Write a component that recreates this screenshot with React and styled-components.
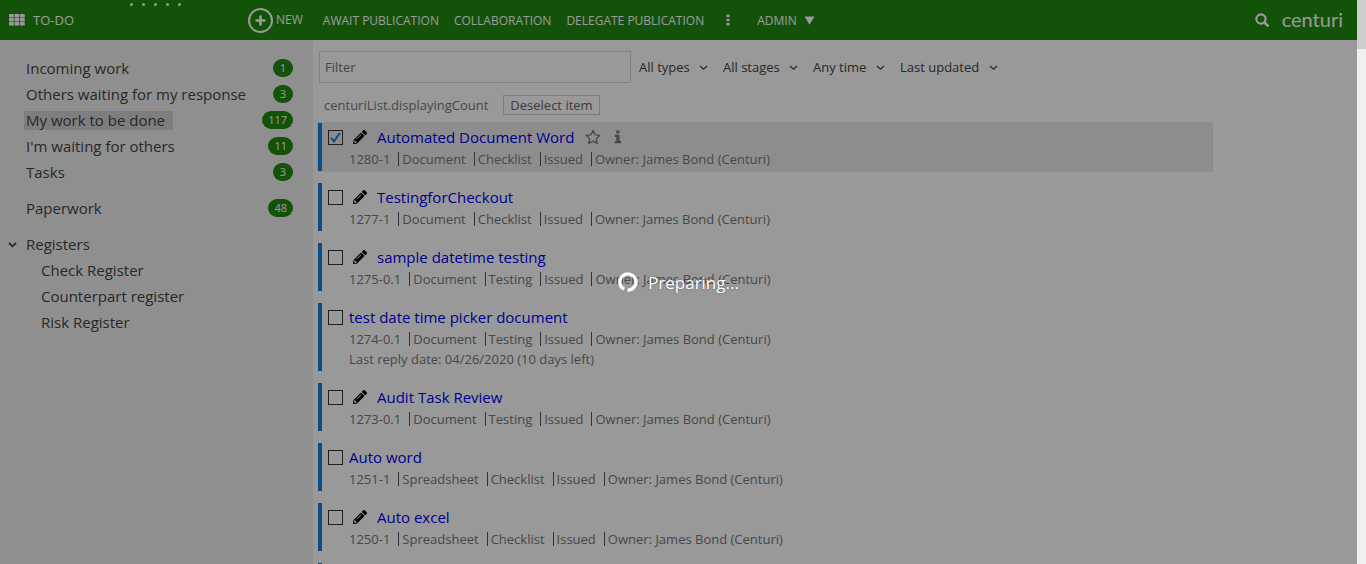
import React from "react";
import styled, { createGlobalStyle, css } from "styled-components";
import { FaPencilAlt } from "react-icons/fa";

const GlobalStyle = createGlobalStyle`
  *, *::before, *::after { box-sizing: border-box; }
  body {
    margin: 0;
    font-family: "Open Sans", "Noto Sans", sans-serif;
    font-size: 13px;
    color: #444;
    background: #fff;
  }
  button, input, select { font: inherit; color: inherit; }
`;

const Window = styled.div`
  display: flex;
  height: 100vh;
  overflow: hidden;
`;

const Page = styled.div`
  position: relative;
  flex: 1;
  min-width: 0;
  display: flex;
  flex-direction: column;
`;

const ScrollTrack = styled.div`
  width: 9px;
  flex: none;
  background: #f0f0f0;
`;

const ScrollThumb = styled.div`
  height: 49px;
  background: #cdcdcd;
`;

const Header = styled.header`
  position: relative;
  flex: none;
  display: flex;
  align-items: center;
  height: 40px;
  padding: 0 14px 0 9px;
  background: #208a10;
  color: #fff;
`;

const DragDots = styled.div`
  position: absolute;
  top: 3px;
  left: 130px;
  display: flex;
  gap: 9px;
`;

const Dot = styled.span`
  width: 3px;
  height: 3px;
  border-radius: 50%;
  background: #fff;
`;

const HomeLink = styled.a`
  display: flex;
  align-items: center;
  gap: 8px;
  width: 239px;
  color: inherit;
  text-decoration: none;
`;

const Nav = styled.nav`
  display: flex;
  align-items: center;
  gap: 15px;
  flex: 1;
`;

const NavButton = styled.button`
  display: flex;
  align-items: center;
  gap: ${(p) => p.$gap || 0}px;
  padding: 1px 0 0;
  border: 0;
  background: none;
  font-size: 12px;
  line-height: 20px;
  white-space: nowrap;
`;

const NewButton = styled(NavButton)`
  padding: 0 5px 0 0;
`;

const MoreButton = styled(NavButton)`
  padding: 0 12px 0 7px;
`;

const PlusRing = styled.span`
  display: grid;
  place-items: center;
  width: 25px;
  height: 25px;
  border: 2px solid #fff;
  border-radius: 50%;
`;

const IconButton = styled.button`
  display: inline-flex;
  padding: 0;
  border: 0;
  background: none;
`;

const Logo = styled.a`
  margin-left: 13px;
  padding-bottom: 3px;
  font-family: Lato, sans-serif;
  font-size: 20px;
  line-height: 24px;
  color: #fff;
  text-decoration: none;
`;

const Body = styled.div`
  flex: 1;
  min-height: 0;
  display: flex;
`;

const Sidebar = styled.aside`
  flex: none;
  width: 313px;
  padding: 15px 20px 0 8px;
  background: #efefef;
  overflow: hidden;
`;

const NavGroup = styled.ul`
  list-style: none;
  margin: 0 0 10px;
  padding: 0 0 0 ${(p) => (p.$nested ? 31 : 16)}px;
`;

const SideItem = styled.li`
  display: flex;
  align-items: center;
  justify-content: space-between;
  height: 26px;
`;

const SideLink = styled.a`
  padding: 0 8px 0 2px;
  font-size: 15px;
  line-height: 19px;
  color: #444;
  text-decoration: none;
  background: ${(p) => (p.$active ? "#d3d3d3" : "transparent")};
`;

const Badge = styled.span`
  min-width: 20px;
  height: 18px;
  padding: 0 6px;
  border-radius: 9px;
  background: #208a10;
  color: #fff;
  font-size: 11px;
  line-height: 18px;
  text-align: center;
`;

const GroupToggle = styled.button`
  display: flex;
  align-items: center;
  gap: 9px;
  height: 26px;
  padding: 0;
  border: 0;
  background: none;
  font-size: 15px;
`;

const Main = styled.main`
  flex: 1;
  min-width: 0;
  padding: 11px 0 0 5px;
  overflow: hidden;
`;

const Toolbar = styled.div`
  display: flex;
  align-items: center;
  gap: 15px;
  padding-left: 1px;
`;

const FilterInput = styled.input`
  width: 312px;
  height: 32px;
  margin-right: -7px;
  padding: 0 5px;
  border: 1px solid #d8d8d8;
  background: transparent;
  &::placeholder { color: #757575; opacity: 1; }
`;

const SelectBox = styled.label`
  display: flex;
  align-items: center;
  gap: 9px;
`;

const Select = styled.select`
  appearance: none;
  padding: 0;
  border: 0;
  background: none;
  font-size: 13px;
  line-height: 20px;
`;

const CountRow = styled.div`
  display: flex;
  align-items: center;
  gap: 15px;
  height: 20px;
  margin: 12px 0 8px 6px;
  color: #777;
`;

const DeselectButton = styled.button`
  height: 20px;
  padding: 0 6px;
  border: 1px solid #d0d0d0;
  background: transparent;
  line-height: 18px;
  color: #666;
`;

const List = styled.ul`
  list-style: none;
  margin: 0;
  padding: 0;
  display: grid;
  gap: 12px;
  width: 86%;
`;

const Row = styled.li`
  display: flex;
  gap: 6px;
  padding: 0 0 2px 6px;
  border-left: 4px solid #0f7fe0;
  ${(p) =>
    p.$selected &&
    css`
      background: #ececec;
      box-shadow: 0 0 0 1px #ececec;
    `}
`;

const CheckBox = styled.input`
  appearance: none;
  flex: none;
  width: 15px;
  height: 15px;
  margin: 7px 0 0;
  border: 1px solid #333;
  background: transparent;
  &:checked {
    background: url("data:image/svg+xml,%3Csvg xmlns='http://www.w3.org/2000/svg' viewBox='0 0 13 13'%3E%3Cpath d='M2 7l3 3.3L10.8 2' fill='none' stroke='%230f7fe0' stroke-width='2'/%3E%3C/svg%3E") center / 13px 13px no-repeat;
  }
`;

const TitleLine = styled.div`
  display: flex;
  align-items: center;
  height: 26px;
  padding-top: 1px;
  color: #777;
`;

const EditIcon = styled(FaPencilAlt)`
  width: 14px;
  height: 14px;
  margin: 1px 10px 0 4px;
  color: #000;
`;

const TitleLink = styled.a`
  margin-right: 11px;
  font-size: 15px;
  line-height: 22px;
  color: #0000f0;
  text-decoration: none;
`;

const TitleTools = styled.span`
  display: flex;
  align-items: center;
  gap: 13px;
`;

const MetaLine = styled.div`
  display: flex;
  align-items: center;
  height: 20px;
  line-height: 20px;
  color: #777;
`;

const MetaPart = styled.span`
  display: flex;
  align-items: center;
  & + &::before {
    content: "";
    width: 1px;
    height: 14px;
    margin: 0 3px 0 8px;
    background: #555;
  }
`;

const Overlay = styled.div`
  position: absolute;
  inset: 0;
  display: flex;
  align-items: center;
  justify-content: center;
  gap: 10px;
  background: rgba(0, 0, 0, 0.4);
  color: #fff;
  font-size: 17px;
  text-shadow: 0 0 2px rgba(0, 0, 0, 0.4);
`;

const Chevron = ({ size = 9, weight = 1.2 }) => (
  <svg width={size} height={size} viewBox="0 0 9 9" fill="none" stroke="#444" strokeWidth={weight} aria-hidden="true">
    <path d="M1 3l3.5 3.3L8 3" />
  </svg>
);

const GridIcon = () => (
  <svg width="16" height="12" viewBox="0 0 16 12" fill="#fff" aria-hidden="true">
    {[0, 4, 8].map((y) =>
      [0, 5.5, 11].map((x) => <rect key={x + "-" + y} x={x} y={y} width="4.8" height="3.4" rx="0.4" />)
    )}
  </svg>
);

const SearchIcon = () => (
  <svg width="14" height="14" viewBox="0 0 14 14" fill="none" stroke="#fff" aria-hidden="true">
    <circle cx="6" cy="6" r="4.6" strokeWidth="2.2" />
    <path d="M9.3 9.3l3.4 3.4" strokeWidth="2.6" strokeLinecap="round" />
  </svg>
);

const StarIcon = () => (
  <svg width="16" height="16" viewBox="0 0 16 16" fill="none" stroke="#777" strokeWidth="1.3" strokeLinejoin="round" aria-hidden="true">
    <path d="M8 1.4l2 4.4 4.8.6-3.5 3.3.9 4.8L8 12.1l-4.2 2.4.9-4.8L1.2 6.4 6 5.8z" />
  </svg>
);

const InfoIcon = () => (
  <svg width="8" height="14" viewBox="0 0 8 14" fill="#777" aria-hidden="true">
    <path d="M2.2.6h3.2v2.9H2.2zM.8 4.8h4.8v6.1h1.5v2.3H.8v-2.3h1.5V7.1H.8z" />
  </svg>
);

const Spinner = () => (
  <svg width="20" height="20" viewBox="0 0 20 20" fill="none" stroke="#fff" strokeWidth="3.2" aria-hidden="true">
    <path d="M9.6 18.1A8.1 8.1 0 1 0 6.2 17.2" />
  </svg>
);

const workItems = [
  { label: "Incoming work", count: 1 },
  { label: "Others waiting for my response", count: 3 },
  { label: "My work to be done", count: 117, active: true },
  { label: "I'm waiting for others", count: 11 },
  { label: "Tasks", count: 3 },
];

const registers = ["Check Register", "Counterpart register", "Risk Register"];
const filters = ["All types", "All stages", "Any time", "Last updated"];
const owner = "Owner: James Bond (Centuri)";

const documents = [
  { title: "Automated Document Word", edit: true, selected: true, meta: ["1280-1", "Document", "Checklist", "Issued", owner] },
  { title: "TestingforCheckout", edit: true, meta: ["1277-1", "Document", "Checklist", "Issued", owner] },
  { title: "sample datetime testing", edit: true, meta: ["1275-0.1", "Document", "Testing", "Issued", owner] },
  {
    title: "test date time picker document",
    meta: ["1274-0.1", "Document", "Testing", "Issued", owner],
    reply: "Last reply date: 04/26/2020 (10 days left)",
  },
  { title: "Audit Task Review", edit: true, meta: ["1273-0.1", "Document", "Testing", "Issued", owner] },
  { title: "Auto word", meta: ["1251-1", "Spreadsheet", "Checklist", "Issued", owner] },
  { title: "Auto excel", edit: true, meta: ["1250-1", "Spreadsheet", "Checklist", "Issued", owner] },
];

function SideEntry({ label, count, active }) {
  return (
    <SideItem>
      <SideLink href="#" $active={active}>{label}</SideLink>
      {count && <Badge>{count}</Badge>}
    </SideItem>
  );
}

function DocumentRow({ doc }) {
  return (
    <Row $selected={doc.selected}>
      <CheckBox type="checkbox" defaultChecked={doc.selected} aria-label={doc.title} />
      <div>
        <TitleLine>
          {doc.edit && <EditIcon />}
          <TitleLink href="#">{doc.title}</TitleLink>
          {doc.selected && (
            <TitleTools>
              <IconButton aria-label="Favourite"><StarIcon /></IconButton>
              <IconButton aria-label="Information"><InfoIcon /></IconButton>
            </TitleTools>
          )}
        </TitleLine>
        <MetaLine>
          {doc.meta.map((part) => <MetaPart key={part}>{part}</MetaPart>)}
        </MetaLine>
        {doc.reply && <MetaLine>{doc.reply}</MetaLine>}
      </div>
    </Row>
  );
}

export default function App() {
  return (
    <Window>
      <GlobalStyle />
      <Page>
        <Header>
          <DragDots>
            {[0, 1, 2, 3, 4].map((n) => <Dot key={n} />)}
          </DragDots>
          <HomeLink href="#"><GridIcon />TO-DO</HomeLink>
          <Nav>
            <NewButton $gap={3}>
              <PlusRing>
                <svg width="11" height="11" viewBox="0 0 11 11" stroke="#fff" strokeWidth="2.6" strokeLinecap="round" aria-hidden="true">
                  <path d="M5.5 1.6v7.8M1.6 5.5h7.8" />
                </svg>
              </PlusRing>
              NEW
            </NewButton>
            <NavButton>AWAIT PUBLICATION</NavButton>
            <NavButton>COLLABORATION</NavButton>
            <NavButton>DELEGATE PUBLICATION</NavButton>
            <MoreButton aria-label="More">
              <svg width="4" height="12" viewBox="0 0 4 12" fill="#fff" aria-hidden="true">
                <path d="M.5.5h3v2.4h-3zM.5 4.8h3v2.4h-3zM.5 9.1h3v2.4h-3z" />
              </svg>
            </MoreButton>
            <NavButton $gap={7}>
              ADMIN
              <svg width="11" height="9" viewBox="0 0 11 9" fill="#fff" aria-hidden="true">
                <path d="M.5.5h10l-5 8.2z" />
              </svg>
            </NavButton>
          </Nav>
          <IconButton aria-label="Search"><SearchIcon /></IconButton>
          <Logo href="#">centuri</Logo>
        </Header>
        <Body>
          <Sidebar>
            <NavGroup>
              {workItems.map((item) => <SideEntry key={item.label} {...item} />)}
            </NavGroup>
            <NavGroup>
              <SideEntry label="Paperwork" count={48} />
            </NavGroup>
            <GroupToggle><Chevron weight={1.8} />Registers</GroupToggle>
            <NavGroup $nested>
              {registers.map((label) => <SideEntry key={label} label={label} />)}
            </NavGroup>
          </Sidebar>
          <Main>
            <Toolbar>
              <FilterInput placeholder="Filter" aria-label="Filter" />
              {filters.map((name) => (
                <SelectBox key={name}>
                  <Select aria-label={name}><option>{name}</option></Select>
                  <Chevron />
                </SelectBox>
              ))}
            </Toolbar>
            <CountRow>
              centuriList.displayingCount
              <DeselectButton>Deselect item</DeselectButton>
            </CountRow>
            <List>
              {documents.map((doc) => <DocumentRow key={doc.title} doc={doc} />)}
              <Row aria-hidden="true">&nbsp;</Row>
            </List>
          </Main>
        </Body>
        <Overlay role="status"><Spinner />Preparing...</Overlay>
      </Page>
      <ScrollTrack><ScrollThumb /></ScrollTrack>
    </Window>
  );
}
